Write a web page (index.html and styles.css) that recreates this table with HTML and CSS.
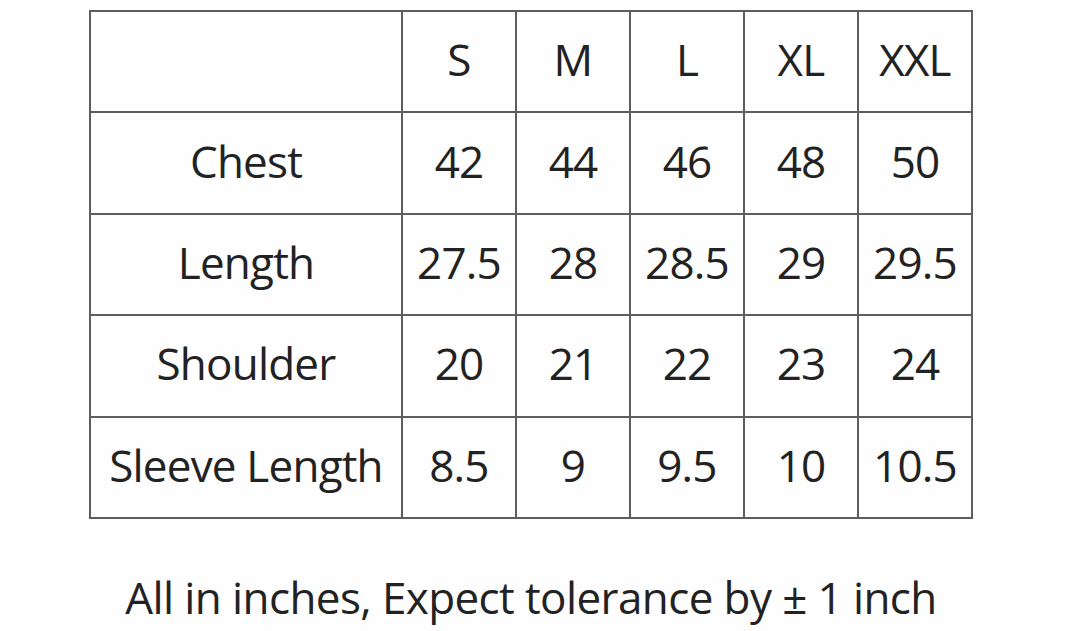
FILE: index.html
```html
<!DOCTYPE html>
<html>
<head>
<meta charset="utf-8">
<link rel="stylesheet" href="styles.css">
</head>
<body>
<div class="page">
  <table class="chart">
    <colgroup>
      <col class="c-label">
      <col class="c-size"><col class="c-size"><col class="c-size"><col class="c-size"><col class="c-size">
    </colgroup>
    <tr><td></td><td>S</td><td>M</td><td>L</td><td>XL</td><td>XXL</td></tr>
    <tr><td>Chest</td><td>42</td><td>44</td><td>46</td><td>48</td><td>50</td></tr>
    <tr><td>Length</td><td>27.5</td><td>28</td><td>28.5</td><td>29</td><td>29.5</td></tr>
    <tr><td>Shoulder</td><td>20</td><td>21</td><td>22</td><td>23</td><td>24</td></tr>
    <tr><td>Sleeve Length</td><td>8.5</td><td>9</td><td>9.5</td><td>10</td><td>10.5</td></tr>
  </table>
  <p class="note">All in inches, Expect tolerance by ± 1 inch</p>
</div>
</body>
</html>
```
FILE: styles.css
```css
html, body {
  margin: 0;
  padding: 0;
  background: #fefefe;
}
.page {
  width: 1065px;
  height: 631px;
  padding: 10px 0 0 89px;
  box-sizing: border-box;
  font-family: "Open Sans", "DejaVu Sans", sans-serif;
  color: #222;
}
.chart {
  border-collapse: collapse;
  table-layout: fixed;
  width: 884px;
}
.c-label { width: 312px; }
.c-size { width: 114px; }
.chart td {
  border: 2px solid #5e5e5e;
  height: 94.4px;
  padding: 0 0 5px 0;
  text-align: center;
  vertical-align: middle;
  font-size: 44px;
  letter-spacing: -0.8px;
  line-height: 1;
  white-space: nowrap;
}
.note {
  width: 884px;
  margin: 56px 0 0 0;
  text-align: center;
  font-size: 44px;
  letter-spacing: -0.6px;
  line-height: 1;
  white-space: nowrap;
}
```
